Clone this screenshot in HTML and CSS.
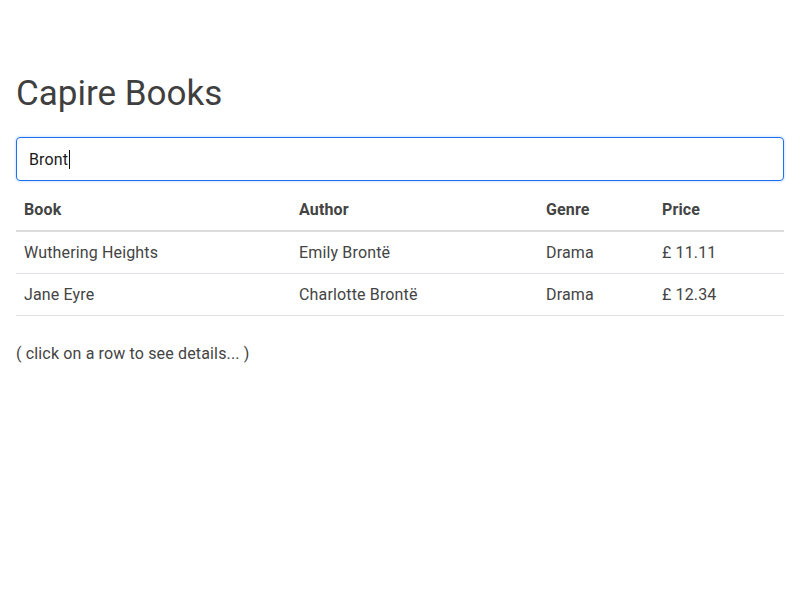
FILE: index.html
```html
<!DOCTYPE html>
<html>
<head>
<meta charset="utf-8">
<link rel="stylesheet" href="styles.css">
</head>
<body>
<div class="container">
  <h1 class="title">Capire Books</h1>
  <div class="search"><span class="search-text">Bront</span><span class="caret"></span></div>
  <table class="books">
    <thead>
      <tr><th class="c-book">Book</th><th class="c-author">Author</th><th class="c-genre">Genre</th><th class="c-price">Price</th></tr>
    </thead>
    <tbody>
      <tr><td>Wuthering Heights</td><td>Emily Brontë</td><td>Drama</td><td>£ 11.11</td></tr>
      <tr><td>Jane Eyre</td><td>Charlotte Brontë</td><td>Drama</td><td>£ 12.34</td></tr>
    </tbody>
  </table>
  <p class="hint">( click on a row to see details... )</p>
</div>
</body>
</html>
```
FILE: styles.css
```css
html, body {
  margin: 0;
  padding: 0;
  background: #fff;
}
body {
  font-family: Roboto, "Liberation Sans", sans-serif;
  font-size: 16px;
  letter-spacing: 0.15px;
  color: #444;
}
.container {
  padding: 72px 16px 16px;
}
.title {
  margin: 0 0 22px;
  font-size: 35px;
  font-weight: 400;
  letter-spacing: 0;
  line-height: 43px;
  color: #3f3f3f;
}
.search {
  box-sizing: border-box;
  height: 44px;
  border: 1px solid #1c6ef2;
  border-radius: 4px;
  box-shadow: 0 0 3px rgba(28, 110, 242, 0.35);
  padding: 0 12px;
  display: flex;
  align-items: center;
  color: #1a1a1a;
  font-size: 16px;
}
.caret {
  display: inline-block;
  width: 1px;
  height: 19px;
  background: #111;
  margin-left: 1px;
}
.books {
  width: 100%;
  border-collapse: collapse;
  margin-top: 8px;
}
.books th, .books td {
  text-align: left;
  padding: 8px;
  line-height: 25px;
  border-bottom: 1px solid #dee2e6;
}
.books th {
  font-weight: 700;
  color: #444;
  border-bottom: 2px solid #dcdcdc;
}
.c-book { width: 259px; }
.c-author { width: 231px; }
.c-genre { width: 100px; }
.hint {
  margin: 26px 0 0;
  line-height: 24px;
}
```
